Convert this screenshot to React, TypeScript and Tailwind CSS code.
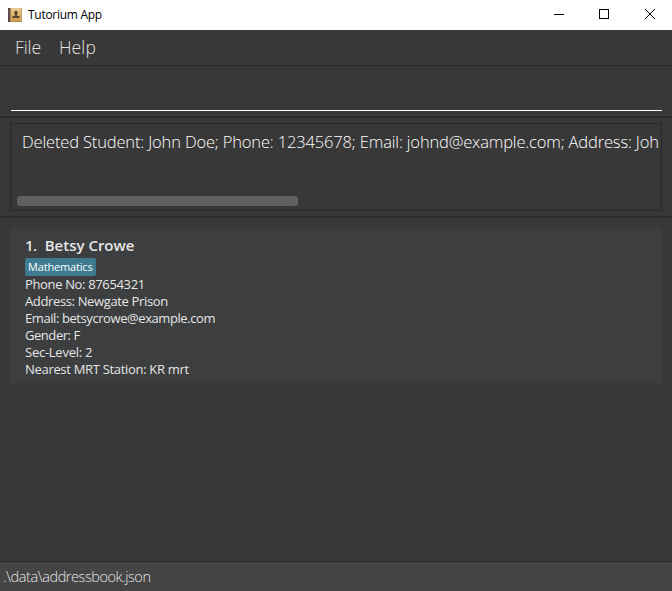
import React from "react";

const details = [
  { text: "Phone No: 87654321", tracking: "tracking-[-0.35px]" },
  { text: "Address: Newgate Prison", tracking: "tracking-[-0.36px]" },
  { text: "Email: betsycrowe@example.com", tracking: "tracking-[-0.42px]" },
  { text: "Gender: F", tracking: "tracking-[-0.45px]" },
  { text: "Sec-Level: 2", tracking: "tracking-[-0.25px]" },
  { text: "Nearest MRT Station: KR mrt", tracking: "tracking-[-0.31px]" },
];

function BookIcon() {
  return (
    <svg width="14" height="14" viewBox="0 0 14 14">
      <defs>
        <linearGradient id="cover" x1="0" y1="0" x2="0" y2="1">
          <stop offset="0" stopColor="#ecca8e" />
          <stop offset="1" stopColor="#c99a4e" />
        </linearGradient>
      </defs>
      <rect width="14" height="14" fill="url(#cover)" />
      <rect width="2" height="14" fill="#5b4a45" />
      <rect x="2" width="1" height="14" fill="#a58458" />
      <path d="M6.5 3h3v3.5H9V8h2.5v2h-7V8H7V6.5h-.5z" fill="#59422a" />
      <rect x="13" width="1" height="14" fill="#c5a064" />
      <rect x="3" y="13" width="11" height="1" fill="#b58a48" />
    </svg>
  );
}

function TitleBar() {
  return (
    <header className="flex h-[30px] shrink-0 items-center bg-white pl-2 text-black">
      <div className="flex h-full items-center pb-px">
        <BookIcon />
      </div>
      <span className="ml-[6px] grow text-[12px] tracking-[-0.28px]">Tutorium App</span>
      <div className="flex pr-[15px]">
        <svg width="104" height="12" viewBox="0 0 104 12" fill="none" stroke="#000" className="-mt-[2px]">
          <path d="M1 6.5h10M46.5 1.5h9v9h-9z" shapeRendering="crispEdges" />
          <path d="M92 1l10 10M102 1l-10 10" />
        </svg>
      </div>
    </header>
  );
}

export default function App() {
  return (
    <div className="flex h-[591px] w-[672px] flex-col overflow-hidden bg-[#383838] font-['Open_Sans','Noto_Sans',sans-serif] whitespace-nowrap">
      <TitleBar />
      <nav className="flex h-9 shrink-0 items-center gap-[18px] border-b border-[#2a2a2a] pl-[15px] text-[17.5px] font-light text-[#e4e4e4]">
        <span className="tracking-[-0.1px]">File</span>
        <span className="tracking-[0.1px]">Help</span>
      </nav>
      <div className="h-[52px] shrink-0 border-b-2 border-[#2a2a2a] pr-[10px] pl-[11px]">
        <div className="h-[45px] border-b border-white" />
      </div>
      <section className="h-[100px] shrink-0 border-b-2 border-[#2a2a2a] px-[10px] pt-[5px]">
        <div className="flex h-[88px] flex-col justify-between overflow-hidden border border-[#2a2a2a] px-[6px] pb-1">
          <p className="-mr-1 h-10 overflow-hidden pt-[6px] pl-[5px] text-[16.5px] leading-6 font-light tracking-[-0.155px] text-white">
            Deleted Student: John Doe; Phone: 12345678; Email: johnd@example.com; Address: Joh
          </p>
          <div className="h-[10px] w-[281px] rounded-[3px] bg-[#606060]" />
        </div>
      </section>
      <main className="grow px-[10px] pt-[10px]">
        <article className="h-[155px] bg-[#3c3e3f] px-[15px] pt-[6px] text-[#e6e6e6]">
          <h2 className="mb-px flex h-[23px] items-center gap-[8px] text-[15px] font-semibold">
            <span className="tracking-[-0.5px]">1.</span>
            <span>Betsy Crowe</span>
          </h2>
          <div className="flex h-[18px] w-[71px] items-center rounded-[2px] bg-[#3e7b91] pl-[3px] text-[11px] tracking-[-0.17px] text-white">
            Mathematics
          </div>
          <ul className="text-[13px] leading-[17px]">
            {details.map((d) => (
              <li key={d.text} className={d.tracking}>
                {d.text}
              </li>
            ))}
          </ul>
        </article>
      </main>
      <footer className="flex h-[30px] shrink-0 items-center border-t border-[#2a2a2a] bg-[#454545] pl-[3px] text-[14.5px] font-light tracking-[-0.43px] text-[#e4e4e4]">
        .\data\addressbook.json
      </footer>
    </div>
  );
}
